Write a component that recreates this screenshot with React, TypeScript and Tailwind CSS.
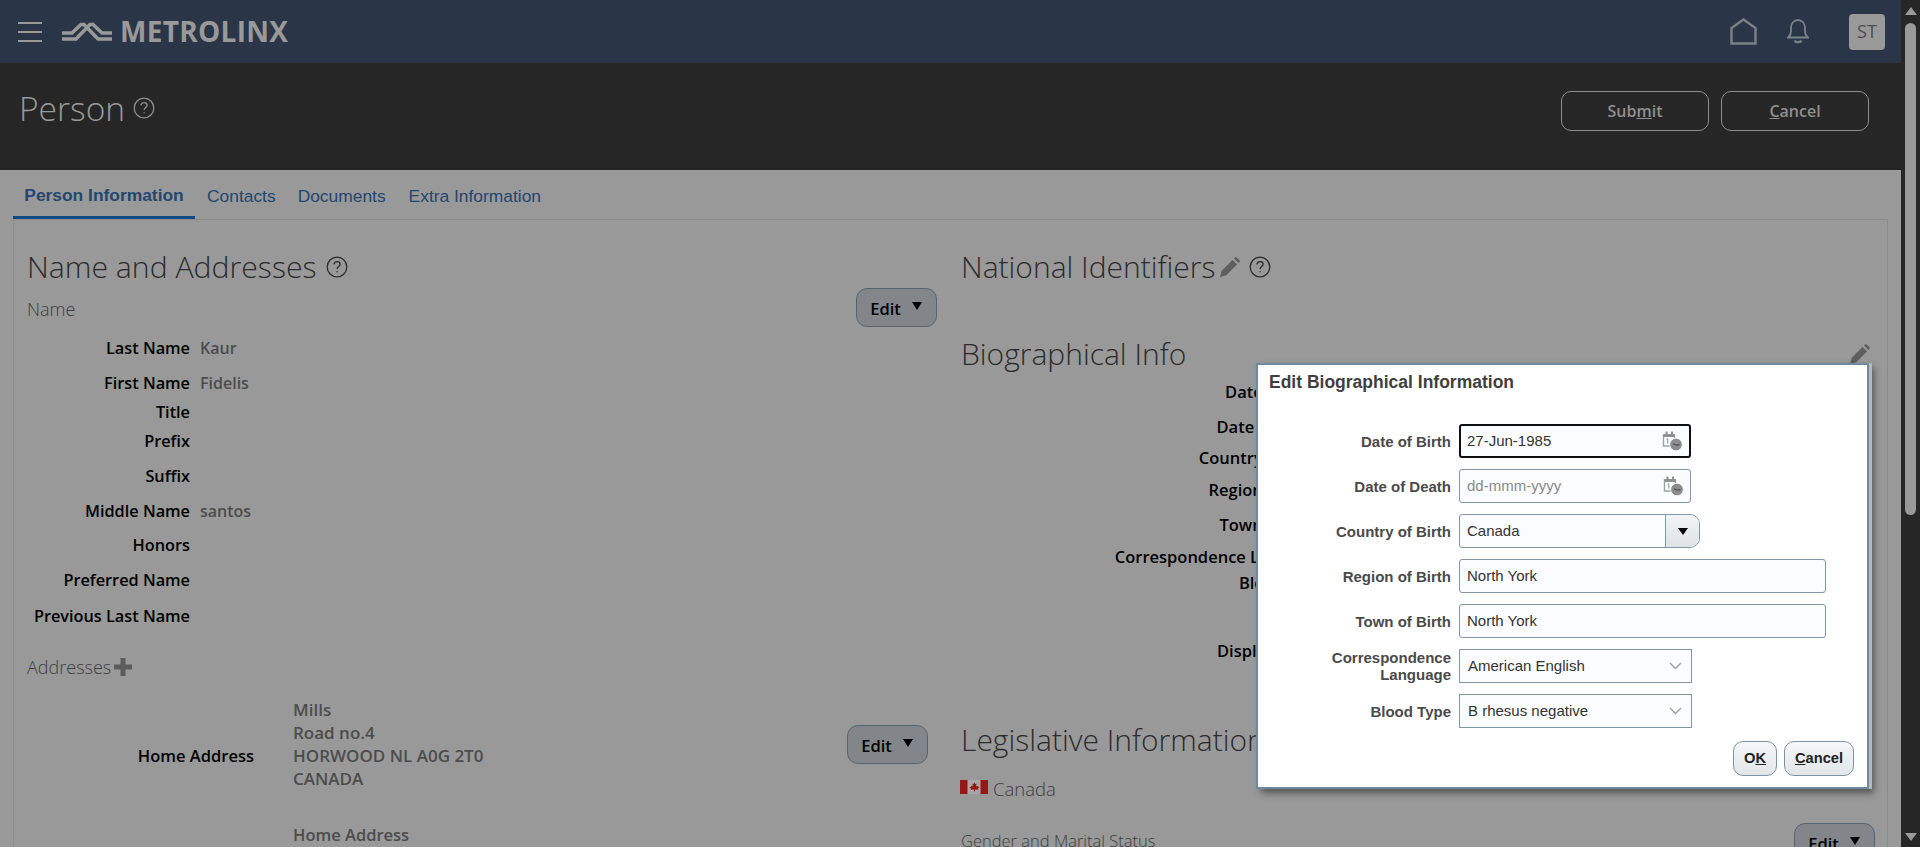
import React from "react";

const sego = { fontFamily: '"Open Sans", "Noto Sans", sans-serif' };

function Help({ size = 22, color = "#2b2b2b" }: { size?: number; color?: string }) {
  return (
    <svg width={size} height={size} viewBox="0 0 22 22" fill="none" stroke={color} strokeWidth="1.3">
      <circle cx="11" cy="11" r="9.8" />
      <path d="M8 8.6c0-1.8 1.4-2.9 3.1-2.9 1.8 0 3 1.1 3 2.6 0 2.2-3 2.4-3 4.8" />
      <circle cx="11.1" cy="15.8" r="0.7" fill={color} stroke="none" />
    </svg>
  );
}

function Pencil() {
  return (
    <svg width="20" height="20" viewBox="0 0 20 20" fill="#5e5e5e">
      <path d="M0 20l1.800-6.300L12.500 3l4.500 4.500L6.300 18.200z" />
      <path d="M14 1.500l1-1c.5-.5 1.200-.5 1.700 0l2.800 2.800c.5.500.5 1.200 0 1.700l-1 1z" />
    </svg>
  );
}

function Row({ label, value, className = "" }: { label: string; value?: string; className?: string }) {
  return (
    <div className={`flex h-[24px] items-center ${className}`}>
      <div className="w-[163px] whitespace-nowrap text-right text-[16.300px] font-semibold text-black">{label}</div>
      <div className="ml-[10px] text-[16px] font-semibold text-[#4c4c4c]">{value}</div>
    </div>
  );
}

function EditBtn({ className = "" }: { className?: string }) {
  return (
    <div className={`flex h-[39px] w-[81px] items-center justify-center gap-[11px] rounded-[11px] border border-[#56646f] bg-[#82868b] pr-[1px] text-[16.500px] font-semibold text-black ${className}`}>
      <span className="mt-[4px]">Edit</span>
      <span className="mb-[3px] h-0 w-0 border-x-[5.500px] border-t-[8px] border-x-transparent border-t-black" />
    </div>
  );
}

function Field({ label, children }: { label: React.ReactNode; children: React.ReactNode }) {
  return (
    <div className="flex h-[34px] items-center">
      <div className="w-[201px] pr-[8px] text-right text-[15px] font-bold leading-[17px] text-[#4a4a4a]">{label}</div>
      {children}
    </div>
  );
}

function CalendarIcon() {
  return (
    <svg width="21" height="21" viewBox="0 0 21 21" className="ml-auto mr-[6px] shrink-0">
      <path d="M1.500 4h11v11h-11z" fill="none" stroke="#a0a0a0" strokeWidth="1.400" />
      <path d="M1.500 3h11v3h-11zM3.500 .5h2V3h-2zM9 .5h2V3H9z" fill="#8f8f8f" />
      <path d="M4.500 8.300l1.300-.7v5" fill="none" stroke="#8f8f8f" strokeWidth="1" />
      <circle cx="14" cy="13.500" r="6.300" fill="#8c8c8c" stroke="#fff" strokeWidth="0.800" />
      <path d="M11 12.800l3.500 1.400 3-0.500" fill="none" stroke="#4f4f4f" strokeWidth="1.200" />
    </svg>
  );
}

function Chevron() {
  return (
    <svg width="13" height="8" viewBox="0 0 13 8" fill="none" stroke="#9aa0a5" strokeWidth="1.400" className="ml-auto mr-[2px]">
      <path d="M1 1l5.500 5.500L12 1" />
    </svg>
  );
}

export default function App() {
  return (
    <div className="relative h-[847px] w-[1920px] overflow-hidden bg-[#999999]" style={{ fontFamily: '"Liberation Sans", sans-serif' }}>
      <div className="flex h-full">
        <div className="flex h-full w-[1901px] flex-col">
          <header className="flex h-[63px] shrink-0 items-center bg-[#2a3648] pl-[18px]">
            <div className="flex w-[24px] flex-col gap-[7px]">
              <div className="h-[2px] bg-[#999]" />
              <div className="h-[2px] bg-[#999]" />
              <div className="h-[2px] bg-[#999]" />
            </div>
            <svg width="50" height="20" viewBox="0 0 50 20" className="ml-[20px]" fill="none" stroke="#999" strokeWidth="3.600">
              <path d="M0 11h10L19 2.500h3L36 17h14" />
              <path d="M0 17h14L28 2.500h3L40 11h10" />
            </svg>
            <span className="mb-[2px] ml-[8px] text-[28px] font-bold leading-none tracking-[0.300px] text-[#999]" style={{ fontFamily: '"Open Sans", sans-serif' }}>METROLINX</span>
            <div className="ml-auto flex items-center pr-[16px]">
              <svg width="27" height="27" viewBox="0 0 27 27" fill="none" stroke="#7b818a" strokeWidth="2.400">
                <path d="M1.500 25.500V10L13.500 1.500 25.500 10v15.500z" />
              </svg>
              <svg width="22" height="25" viewBox="0 0 22 25" fill="none" stroke="#7b818a" strokeWidth="1.800" className="ml-[30px]">
                <path d="M1 18.500c2-1.500 3-3 3-6.500V8.500c0-4 3-7.500 7-7.500s7 3.500 7 7.500V12c0 3.500 1 5 3 6.500z" />
                <path d="M7.500 21.500c1 2.200 6 2.200 7 0" strokeWidth="2.200" />
              </svg>
              <div className="ml-[40px] flex h-[36px] w-[36px] items-center justify-center rounded-[4px] bg-[#999] text-[18px] text-[#4d4d4d]" style={sego}>ST</div>
            </div>
          </header>
          <div className="flex h-[107px] shrink-0 items-start justify-between bg-[#262626] pl-[19px] pr-[32px]">
            <div className="mt-[21px] flex items-center gap-[8px]">
              <span className="text-[33.500px] font-light leading-[48px] text-[#9a9a9a]" style={sego}>Person</span>
              <Help size={22} color="#8f8f8f" />
            </div>
            <div className="mt-[28px] flex gap-[12px]">
              {["Sub|m|it", "|C|ancel"].map((t) => {
                const [a, b, c] = t.split("|");
                return (
                  <div key={t} className="flex h-[40px] w-[148px] items-center justify-center rounded-[10px] border border-[#8c8c8c] text-[16px] font-semibold text-[#8f8f8f]" style={sego}>
                    {a}<span className="underline">{b}</span>{c}
                  </div>
                );
              })}
            </div>
          </div>
          <div className="flex h-[49px] shrink-0 items-end pl-[13px] text-[17.400px] text-[#24466f]">
            <div className="flex h-[49px] w-[182px] items-center justify-center whitespace-nowrap border-b-[3px] border-[#0f4a85] pt-[4px] font-bold">Person Information</div>
            <div className="flex h-[49px] items-center pl-[12px] pt-[3px]">Contacts</div>
            <div className="flex h-[49px] items-center pl-[22px] pt-[3px]">Documents</div>
            <div className="flex h-[49px] items-center pl-[23px] pt-[3px]">Extra Information</div>
          </div>
          <main className="ml-[13px] mr-[13px] flex min-h-0 flex-1 border-l border-r border-t border-[#8b8b8b] pl-[13px]" style={sego}>
            <section className="w-[934px] shrink-0">
              <div className="mt-[26px] flex items-center gap-[9px]">
                <span className="text-[30.200px] font-light leading-[42px] text-[#2b2b2b]">Name and Addresses</span>
                <Help />
              </div>
              <div className="flex items-center justify-between pr-[24px]">
                <span className="pt-[3px] text-[18px] font-light text-[#3d3d3d]">Name</span>
                <EditBtn />
              </div>
              <Row className="mt-[9px]" label="Last Name" value="Kaur" />
              <Row className="mt-[11px]" label="First Name" value="Fidelis" />
              <Row className="mt-[5px]" label="Title" />
              <Row className="mt-[5px]" label="Prefix" />
              <Row className="mt-[11px]" label="Suffix" />
              <Row className="mt-[11px]" label="Middle Name" value="santos" />
              <Row className="mt-[10px]" label="Honors" />
              <Row className="mt-[11px]" label="Preferred Name" />
              <Row className="mt-[12px]" label="Previous Last Name" />
              <div className="mt-[26px] flex h-[26px] items-center gap-[3px]">
                <span className="text-[18px] font-light text-[#3d3d3d]">Addresses</span>
                <svg width="18" height="18" viewBox="0 0 18 18" fill="#5c5c5c"><path d="M6.500 0h5v6.500H18v5h-6.500V18h-5v-6.500H0v-5h6.500z" /></svg>
              </div>
              <div className="mt-[18px] flex items-center">
                <div className="mt-[24px] w-[227px] text-right text-[16.500px] font-semibold text-black">Home Address</div>
                <div className="ml-[39px] text-[17px] font-semibold leading-[23px] text-[#4c4c4c]">
                  <div>Mills</div>
                  <div>Road no.4</div>
                  <div>HORWOOD NL A0G 2T0</div>
                  <div>CANADA</div>
                </div>
                <EditBtn className="ml-auto mr-[33px]" />
              </div>
              <div className="ml-[266px] mt-[33px] text-[16.500px] font-semibold leading-[23px] text-[#4c4c4c]">Home Address</div>
            </section>
            <section className="flex-1">
              <div className="mt-[26px] flex items-center">
                <span className="text-[30px] font-light leading-[42px] text-[#2b2b2b]">National Identifiers</span>
                <span className="ml-[5px]"><Pencil /></span>
                <span className="ml-[9px]"><Help /></span>
              </div>
              <div className="mt-[45px] flex items-center justify-between pr-[17px]">
                <span className="text-[30px] font-light leading-[42px] text-[#2b2b2b]">Biographical Info</span>
                <Pencil />
              </div>
              <div className="w-[366px] text-right text-[16.500px] font-semibold leading-[24px] text-black">
                <div className="mt-[5px]">Date of Birth</div>
                <div className="mt-[11px]">Date of Death</div>
                <div className="mt-[7px]">Country of Birth</div>
                <div className="mt-[8px]">Region of Birth</div>
                <div className="mt-[11px]">Town of Birth</div>
                <div className="mt-[8px] whitespace-nowrap">Correspondence Language</div>
                <div className="mt-[2px]">Blood Type</div>
                <div className="mt-[44px]">Display Name</div>
              </div>
              <div className="mt-[56px] text-[30px] font-light leading-[42px] text-[#2b2b2b]">Legislative Information</div>
              <div className="ml-[-1px] mt-[15px] flex h-[26px] items-center gap-[5px]">
                <svg width="28" height="14" viewBox="0 0 28 14" className="mb-[5px]">
                  <rect width="28" height="14" fill="#aba5a5" />
                  <rect width="7.500" height="14" fill="#941818" />
                  <rect x="20.500" width="7.500" height="14" fill="#941818" />
                  <path d="M14 2l1.200 2 1.300-.5-.4 3 1.600-.8.400 1.300 1.400.3-1.500 1.500.3 1-3.300-.3v2h-1v-2l-3.300.3.300-1-1.500-1.500 1.400-.3.400-1.300 1.600.8-.4-3 1.300.5z" fill="#941818" />
                </svg>
                <span className="text-[18.500px] font-light text-[#3d3d3d]">Canada</span>
              </div>
              <div className="mt-[21px] flex items-start justify-between pr-[12px]">
                <span className="mt-[6px] text-[16.500px] font-light leading-[24px] text-[#3d3d3d]">Gender and Marital Status</span>
                <EditBtn />
              </div>
            </section>
          </main>
        </div>
        <div className="flex h-full w-[19px] flex-col items-center bg-[#262626]">
          <div className="mt-[7px] h-0 w-0 border-x-[6px] border-b-[8px] border-x-transparent border-b-[#999]" />
          <div className="mt-[8px] h-[492px] w-[11px] rounded-[6px] bg-[#999]" />
          <div className="mb-[6px] mt-auto h-0 w-0 border-x-[6px] border-t-[8px] border-x-transparent border-t-[#999]" />
        </div>
      </div>

      <div className="absolute left-[1256px] top-[363px] h-[426px] w-[613px] border-[2px] border-[#6e8aa0] bg-white shadow-[3px_0_0_#b4b9bd,5px_4px_7px_rgba(0,0,0,0.45)]">
        <div className="ml-[11px] mt-[7px] text-[17.500px] font-bold leading-[20px] text-[#3f3f3f]">Edit Biographical Information</div>
        <div className="mt-[32px] flex flex-col gap-[11px] text-[15px] text-[#333]">
          <Field label="Date of Birth">
            <div className="flex h-[34px] w-[232px] items-center rounded-[3px] border-[2px] border-[#111] bg-[#fbfcfe] pl-[6px]">27-Jun-1985<CalendarIcon /></div>
          </Field>
          <Field label="Date of Death">
            <div className="flex h-[34px] w-[232px] items-center rounded-[3px] border border-[#8197a6] bg-[#fbfcfe] pl-[7px] text-[#8a8a8a]">dd-mmm-yyyy<CalendarIcon /></div>
          </Field>
          <Field label="Country of Birth">
            <div className="flex h-[34px] w-[241px] overflow-hidden rounded-[3px] rounded-r-[10px] border border-[#8197a6] bg-[#fbfcfe]">
              <div className="flex flex-1 items-center pl-[7px]">Canada</div>
              <div className="flex w-[34px] items-center justify-center border-l border-[#8197a6] bg-gradient-to-b from-[#f2f4f5] to-[#dfe3e6]">
                <span className="h-0 w-0 border-x-[5.500px] border-t-[7px] border-x-transparent border-t-black" />
              </div>
            </div>
          </Field>
          <Field label="Region of Birth">
            <div className="flex h-[34px] w-[367px] items-center rounded-[3px] border border-[#8197a6] bg-[#fbfcfe] pl-[7px]">North York</div>
          </Field>
          <Field label="Town of Birth">
            <div className="flex h-[34px] w-[367px] items-center rounded-[3px] border border-[#8197a6] bg-[#fbfcfe] pl-[7px]">North York</div>
          </Field>
          <Field label={<>Correspondence<br />Language</>}>
            <div className="flex h-[34px] w-[233px] items-center border border-[#8197a6] bg-[#fbfcfe] pl-[8px] pr-[7px]">American English<Chevron /></div>
          </Field>
          <Field label="Blood Type">
            <div className="flex h-[34px] w-[233px] items-center border border-[#8197a6] bg-[#fbfcfe] pl-[8px] pr-[7px]">B rhesus negative<Chevron /></div>
          </Field>
        </div>
        <div className="absolute bottom-[11px] right-[13px] flex gap-[7px] text-[14.700px] font-bold text-[#222]">
          <div className="flex h-[35px] w-[44px] items-center justify-center rounded-[10px] border border-[#7d93a3] bg-gradient-to-b from-[#f5f7f8] to-[#e2e6e9]"><span>O<span className="underline">K</span></span></div>
          <div className="flex h-[35px] w-[70px] items-center justify-center rounded-[10px] border border-[#7d93a3] bg-gradient-to-b from-[#f5f7f8] to-[#e2e6e9]"><span><span className="underline">C</span>ancel</span></div>
        </div>
      </div>
    </div>
  );
}
